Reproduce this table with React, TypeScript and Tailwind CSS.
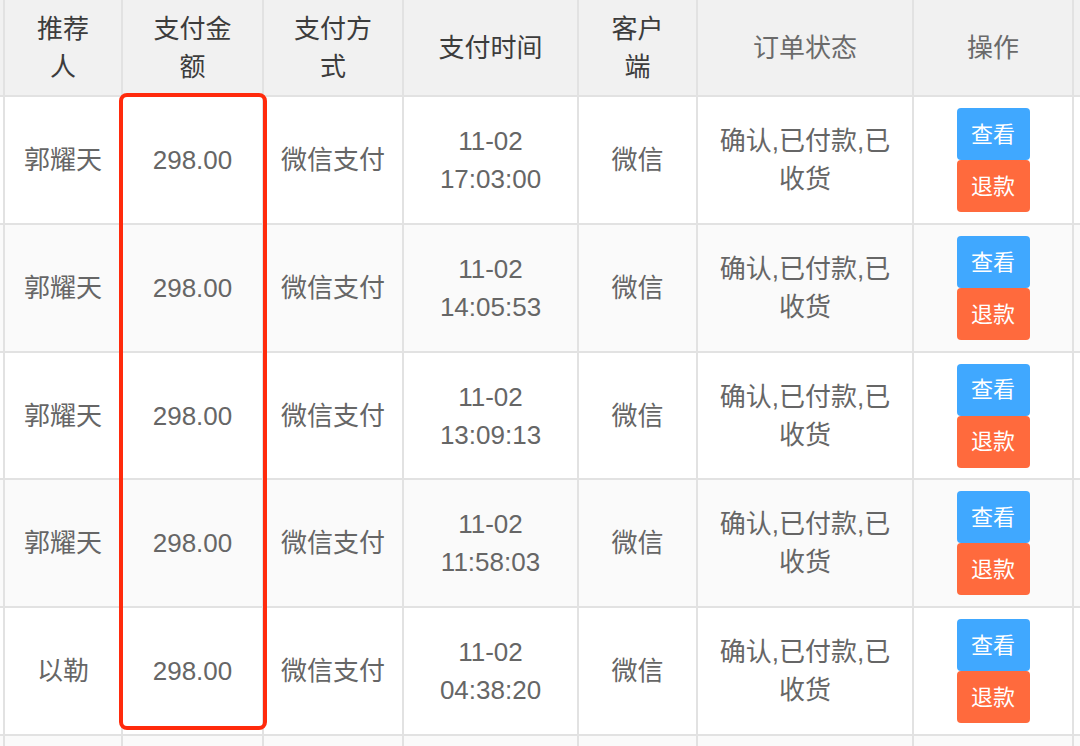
const orders = [
  { name: '郭耀天', time: '17:03:00', h: 'h-[126px]' },
  { name: '郭耀天', time: '14:05:53', h: 'h-[126px]' },
  { name: '郭耀天', time: '13:09:13', h: 'h-[125px]' },
  { name: '郭耀天', time: '11:58:03', h: 'h-[126px]' },
  { name: '以勒', time: '04:38:20', h: 'h-[126px]' },
];

const headers = [
  { label: '推荐人', dark: true },
  { label: '支付金额', dark: true },
  { label: '支付方式', dark: true },
  { label: '支付时间', dark: true },
  { label: '客户端', dark: true },
  { label: '订单状态', dark: false },
  { label: '操作', dark: false },
];

function Cell({ children, bg }: { children?: React.ReactNode; bg: string }) {
  return (
    <div className={`${bg} flex items-center justify-center px-[14px] text-center text-[26px] leading-[38px] text-[#666]`}>
      {children}
    </div>
  );
}

export default function App() {
  return (
    <div
      className="relative h-[746px] w-[1080px] overflow-hidden bg-white"
      style={{ fontFamily: '"Liberation Sans", "Noto Sans CJK SC", sans-serif' }}
    >
      <div className="grid grid-cols-[3px_116px_139px_138px_173px_117px_214px_158px_6px] gap-[2px] bg-[#e2e2e2]">
        {/* header */}
        <div className="h-[95px] bg-[#f1f1f1]" />
        {headers.map((h) => (
          <div
            key={h.label}
            className={`flex h-[95px] items-center justify-center bg-[#f1f1f1] px-[20px] text-center text-[26px] leading-[38px] ${
              h.dark ? 'text-[#3c3c3c]' : 'text-[#6a6a6a]'
            }`}
          >
            {h.label}
          </div>
        ))}
        <div className="h-[95px] bg-[#f1f1f1]" />

        {orders.map((o, i) => {
          const bg = i % 2 === 0 ? 'bg-white' : 'bg-[#fafafa]';
          return [
            <div key={`l${i}`} className={`${o.h} ${bg}`} />,
            <Cell key={`a${i}`} bg={bg}>{o.name}</Cell>,
            <Cell key={`b${i}`} bg={bg}>298.00</Cell>,
            <Cell key={`c${i}`} bg={bg}>微信支付</Cell>,
            <Cell key={`d${i}`} bg={bg}>
              11-02
              <br />
              {o.time}
            </Cell>,
            <Cell key={`e${i}`} bg={bg}>微信</Cell>,
            <Cell key={`f${i}`} bg={bg}>确认,已付款,已收货</Cell>,
            <div key={`g${i}`} className={`${bg} flex items-center justify-center`}>
              <div className="flex w-[73px] flex-col">
                <button className="h-[52px] rounded-[4px] bg-[#40a8ff] text-[22px] text-white">查看</button>
                <button className="h-[52px] rounded-[4px] bg-[#ff6a3d] text-[22px] text-white">退款</button>
              </div>
            </div>,
            <div key={`r${i}`} className={bg} />,
          ];
        })}

        {/* partially visible next row */}
        {Array.from({ length: 9 }).map((_, k) => (
          <div key={`n${k}`} className="h-[40px] bg-[#fafafa]" />
        ))}
      </div>

      {/* highlight box over the amount column */}
      <div className="pointer-events-none absolute left-[119px] top-[93px] h-[637px] w-[148px] rounded-[8px] border-[4px] border-[#ff2a0c]" />
    </div>
  );
}
